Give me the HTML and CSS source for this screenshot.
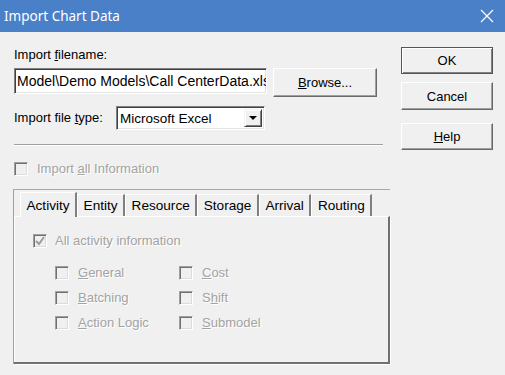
FILE: index.html
```html
<!DOCTYPE html>
<html lang="en">
<head>
  <meta charset="UTF-8" />
  <title>Import Chart Data</title>
  <link rel="stylesheet" href="styles.css">
</head>
<body>

<div class="window">
  <div class="titlebar">
    <span class="title">Import Chart Data</span>
    <svg class="close" viewBox="0 0 14 14" width="14" height="14">
      <path d="M1 1 L13 13 M13 1 L1 13" stroke="#fff" stroke-width="1.2" fill="none" />
    </svg>
  </div>

  <div class="content">
    <div class="main">
      <div class="label">Import <u>f</u>ilename:</div>
      <div class="file-row">
        <div class="textbox">Model\Demo Models\Call CenterData.xlsx</div>
        <div class="btn browse"><span><u>B</u>rowse...</span></div>
      </div>

      <div class="type-row">
        <span class="label type-label">Import file <u>t</u>ype:</span>
        <div class="combo">
          <span class="combo-text">Microsoft Excel</span>
          <span class="drop">
            <svg viewBox="0 0 8 4" width="8" height="4"><polygon points="0,0 8,0 4,4" fill="#000" /></svg>
          </span>
        </div>
      </div>

      <div class="sep"></div>

      <div class="check disabled">
        <span class="box"></span>
        <span>Import <u>a</u>ll Information</span>
      </div>

      <div class="tabbox">
        <div class="tabs">
          <div class="tab active">Activity</div>
          <div class="tab">Entity</div>
          <div class="tab">Resource</div>
          <div class="tab">Storage</div>
          <div class="tab">Arrival</div>
          <div class="tab">Routing</div>
        </div>
        <div class="panel">
          <div class="check disabled all-row">
            <span class="box">
              <svg viewBox="0 0 12 12" width="12" height="12"><polyline points="2,6 5,9 10,2" stroke="#9c9c9c" stroke-width="2" fill="none" /></svg>
            </span>
            <span>All activity information</span>
          </div>
          <div class="sub-grid">
            <div class="check disabled"><span class="box"></span><span><u>G</u>eneral</span></div>
            <div class="check disabled"><span class="box"></span><span><u>C</u>ost</span></div>
            <div class="check disabled"><span class="box"></span><span><u>B</u>atching</span></div>
            <div class="check disabled"><span class="box"></span><span>S<u>h</u>ift</span></div>
            <div class="check disabled"><span class="box"></span><span><u>A</u>ction Logic</span></div>
            <div class="check disabled"><span class="box"></span><span><u>S</u>ubmodel</span></div>
          </div>
        </div>
      </div>
    </div>

    <div class="side">
      <div class="btn default"><span>OK</span></div>
      <div class="btn cancel"><span>Cancel</span></div>
      <div class="btn help"><span><u>H</u>elp</span></div>
    </div>
  </div>
</div>

</body>
</html>
```

FILE: styles.css
```css
body {
  margin: 0;
  background: #f0f0f0;
}

.window {
  width: 505px;
  height: 375px;
  background: #f0f0f0;
  font-family: "Liberation Sans", Arial, sans-serif;
  font-size: 13px;
  color: #000;
  overflow: hidden;
}

/* title bar */
.titlebar {
  height: 32px;
  box-sizing: border-box;
  background: #4a80c8;
  color: #fff;
  display: flex;
  align-items: center;
  justify-content: space-between;
  padding: 0 11px 0 4px;
  font-family: "Noto Sans", sans-serif;
  font-size: 13.5px;
}

.close {
  display: block;
}

.content {
  display: flex;
  padding: 15px 0 0 14px;
}

.main {
  width: 375px;
}

.side {
  margin-left: 12px;
  display: flex;
  flex-direction: column;
}

.label {
  line-height: 16px;
}

/* filename row */
.file-row {
  display: flex;
  align-items: flex-start;
  gap: 6px;
  margin-top: 5px;
}

.textbox {
  width: 253px;
  height: 26px;
  box-sizing: border-box;
  background: #fff;
  border: 1px solid;
  border-color: #808080 #fff #fff #808080;
  box-shadow: inset 1px 1px #404040, inset -1px -1px #e3e3e3;
  padding: 0 0 0 2px;
  font-size: 14px;
  line-height: 25px;
  white-space: nowrap;
  overflow: hidden;
}

/* buttons */
.btn {
  box-sizing: border-box;
  background: #f0f0f0;
  border: 1px solid;
  border-color: #fff #696969 #696969 #fff;
  box-shadow: inset -1px -1px #a0a0a0;
  display: flex;
  align-items: center;
  justify-content: center;
  font-size: 13px;
}

.browse {
  width: 104px;
  height: 29px;
}

.side .btn {
  width: 92px;
}

.default {
  height: 27px;
  border: 1px solid #555;
  box-shadow: inset 1px 1px #fff, inset -1px -1px #808080;
}

.cancel {
  height: 28px;
  margin-top: 8px;
}

.help {
  height: 27px;
  margin-top: 13px;
}

/* file type row */
.type-row {
  display: flex;
  align-items: center;
  margin-top: 9px;
}

.type-label {
  width: 102px;
}

.combo {
  width: 149px;
  height: 24px;
  box-sizing: border-box;
  background: #fff;
  border: 1px solid;
  border-color: #808080 #fff #fff #808080;
  box-shadow: inset 1px 1px #404040, inset -1px -1px #e3e3e3;
  display: flex;
  align-items: center;
  justify-content: space-between;
  padding: 0 2px 0 3px;
}

.combo-text {
  font-size: 13.5px;
}

.drop {
  width: 18px;
  height: 18px;
  box-sizing: border-box;
  background: #f0f0f0;
  border: 1px solid;
  border-color: #f0f0f0 #404040 #404040 #f0f0f0;
  box-shadow: inset 1px 1px #fff, inset -1px -1px #808080;
  display: flex;
  align-items: center;
  justify-content: center;
}

.drop svg {
  display: block;
}

.sep {
  width: 369px;
  margin-top: 14px;
  border-top: 1px solid #a0a0a0;
  border-bottom: 1px solid #fff;
}

/* check boxes */
.check {
  display: flex;
  align-items: center;
  gap: 9px;
  height: 16px;
  line-height: 16px;
  white-space: nowrap;
}

.check.disabled {
  color: #a3a3a3;
  text-shadow: 1px 1px 0 #fff;
}

.sep + .check {
  margin-top: 15px;
}

.box {
  width: 14px;
  height: 14px;
  flex: none;
  box-sizing: border-box;
  border: 1px solid;
  border-color: #a0a0a0 #fff #fff #a0a0a0;
  box-shadow: inset 1px 1px #707070, inset -1px -1px #dcdcdc;
  background: #f0f0f0;
  display: flex;
  align-items: center;
  justify-content: center;
}

.box svg {
  display: block;
}

/* tab control */
.tabbox {
  margin: 12px 0 0 -1px;
  width: 376px;
  border-top: 1px solid #a8a8a8;
  border-left: 1px solid #a0a0a0;
}

.tabs {
  display: flex;
  align-items: flex-end;
  height: 26px;
  padding-left: 6px;
}

.tab {
  height: 22px;
  box-sizing: border-box;
  padding: 0 5.5px;
  border-left: 1px solid #fff;
  border-top: 1px solid #fff;
  border-right: 2px solid #808080;
  display: flex;
  align-items: center;
  font-size: 13.6px;
}

.tab.active {
  height: 25px;
  margin-bottom: -1px;
  position: relative;
  background: #f0f0f0;
}

.panel {
  height: 148px;
  box-sizing: border-box;
  border-top: 1px solid #fff;
  border-right: 2px solid #707070;
  border-bottom: 2px solid #707070;
  box-shadow: inset 1px 0 #fff, 1px 1px #fff;
  padding: 16px 0 0 19px;
}

.all-row {
  gap: 8px;
}

.sub-grid {
  display: grid;
  grid-template-columns: 124px auto;
  row-gap: 9px;
  margin: 16px 0 0 22px;
}
```
